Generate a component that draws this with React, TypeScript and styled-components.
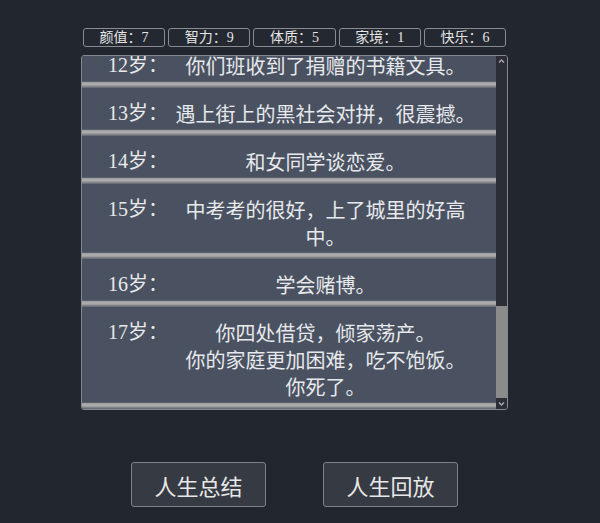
import React, { useLayoutEffect, useRef, useState } from "react";
import styled, { createGlobalStyle } from "styled-components";

const GlobalStyle = createGlobalStyle`
  html, body {
    margin: 0;
    padding: 0;
    background: #22262f;
  }
  body {
    font-family: "Noto Sans CJK SC", "Noto Sans", sans-serif;
  }
`;

const Page = styled.div`
  width: 589px;
  min-height: 523px;
  box-sizing: border-box;
  padding-top: 28px;
  display: flex;
  flex-direction: column;
  align-items: center;
`;

const Stats = styled.div`
  width: 423px;
  display: grid;
  grid-template-columns: repeat(5, 1fr);
  gap: 3px;
`;

const Stat = styled.div`
  height: 19px;
  box-sizing: border-box;
  border: 1px solid #898c93;
  border-radius: 3px;
  background: #242830;
  color: #e6e6e6;
  display: flex;
  align-items: center;
  justify-content: center;
  font: 14px/1 "Liberation Serif", "Noto Sans CJK SC", serif;
`;

const ListBox = styled.div`
  margin-top: 8px;
  width: 427px;
  height: 355px;
  box-sizing: border-box;
  border: 1px solid #85888e;
  border-radius: 3px;
  background: #2b2e36;
  overflow: hidden;
  display: flex;
`;

const Viewport = styled.div`
  flex: 1;
  min-width: 0;
  overflow-y: auto;
  scrollbar-width: none;
  &::-webkit-scrollbar {
    display: none;
  }
`;

const ScrollBar = styled.div`
  flex: none;
  width: 11px;
  display: flex;
  flex-direction: column;
  background: #2b2e36;
`;

const ScrollButton = styled.div`
  flex: none;
  height: 11px;
  display: flex;
  align-items: center;
  justify-content: center;
`;

const Track = styled.div`
  flex: 1;
  display: flex;
  flex-direction: column;
`;

const Thumb = styled.div`
  flex: none;
  background: #8b8b8b;
`;

const Row = styled.div`
  background: #4a5261;
  display: flex;
  flex-direction: column;
`;

const RowBody = styled.div`
  display: flex;
  padding: 12px 15px 2px 26px;
  color: #e7e9ec;
  font-size: 20px;
  line-height: 27px;
`;

const Age = styled.div`
  flex: none;
  width: 62px;
  font-family: "Liberation Serif", "Noto Sans CJK SC", serif;
`;

const Events = styled.div`
  flex: 1;
  text-align: center;
  font-family: "Noto Sans CJK SC", sans-serif;
`;

const Divider = styled.div`
  height: 7px;
  background: linear-gradient(
    to bottom,
    #5c6169 0px,
    #5c6169 1px,
    #939597 1px,
    #aaaaaa 2px,
    #aaaaaa 4px,
    #8e8f91 5px,
    #74777d 6px,
    #60656d 7px
  );
`;

const Buttons = styled.div`
  margin-top: 52px;
  display: flex;
  gap: 57px;
`;

const Button = styled.button`
  width: 135px;
  height: 45px;
  box-sizing: border-box;
  border: 1px solid #7d8189;
  border-radius: 3px;
  background: #363a43;
  color: #e8e8e8;
  font: 22px/1 "Noto Sans CJK SC", sans-serif;
  padding: 0;
  display: flex;
  align-items: center;
  justify-content: center;
  cursor: pointer;
`;

const Chevron = ({ up }: { up?: boolean }) => (
  <svg width="11" height="11" viewBox="0 0 11 11">
    <path
      d={up ? "M3 6.5 L5.5 4 L8 6.5" : "M3 4.5 L5.5 7 L8 4.5"}
      fill="none"
      stroke="#a9abb0"
      strokeWidth="1.4"
    />
  </svg>
);

const stats = [
  { name: "颜值", value: 7 },
  { name: "智力", value: 9 },
  { name: "体质", value: 5 },
  { name: "家境", value: 1 },
  { name: "快乐", value: 6 },
];

const life: { age: number; events: string[] }[] = [
  { age: 0, events: ["你出生了，是个男孩。", "你的家庭是普通工薪阶层。"] },
  { age: 1, events: ["你学会了走路。", "你第一次叫了“妈妈”。"] },
  { age: 2, events: ["你在家里玩耍。", "你学会了说很多话。"] },
  { age: 3, events: ["你上了幼儿园。", "你交到了第一个好朋友。"] },
  { age: 4, events: ["你在幼儿园里很调皮。", "老师经常批评你。"] },
  { age: 5, events: ["你学会了骑自行车。", "你摔了一跤，膝盖流血了。"] },
  { age: 6, events: ["你上了小学。", "你的成绩还不错。"] },
  { age: 7, events: ["你加入了少先队。", "你戴上了红领巾。"] },
  { age: 8, events: ["你迷上了动画片。", "你每天放学都看电视。"] },
  { age: 9, events: ["你的父母吵了一架。", "你很害怕。"] },
  { age: 10, events: ["你考试考了第一名。", "父母给你买了新书包。"] },
  { age: 11, events: ["你沉迷于电子游戏。", "成绩有所下降。"] },
  { age: 12, events: ["你们班收到了捐赠的书籍文具。"] },
  { age: 13, events: ["遇上街上的黑社会对拼，很震撼。"] },
  { age: 14, events: ["和女同学谈恋爱。"] },
  { age: 15, events: ["中考考的很好，上了城里的好高中。"] },
  { age: 16, events: ["学会赌博。"] },
  { age: 17, events: ["你四处借贷，倾家荡产。", "你的家庭更加困难，吃不饱饭。", "你死了。"] },
];

export default function App() {
  const viewRef = useRef<HTMLDivElement>(null);
  const trackRef = useRef<HTMLDivElement>(null);
  const [thumb, setThumb] = useState({ top: 0, height: 40 });

  useLayoutEffect(() => {
    const el = viewRef.current;
    const track = trackRef.current;
    if (!el || !track) return;
    el.scrollTop = el.scrollHeight;
    const update = () => {
      const trackH = track.clientHeight;
      const ratio = el.clientHeight / el.scrollHeight;
      const h = Math.max(20, Math.round(trackH * ratio));
      const maxScroll = el.scrollHeight - el.clientHeight;
      const top = maxScroll > 0 ? Math.round((trackH - h) * (el.scrollTop / maxScroll)) : 0;
      setThumb({ top, height: h });
    };
    update();
    el.addEventListener("scroll", update);
    return () => el.removeEventListener("scroll", update);
  }, []);

  return (
    <>
      <GlobalStyle />
      <Page>
        <Stats>
          {stats.map((s) => (
            <Stat key={s.name}>
              {s.name}：{s.value}
            </Stat>
          ))}
        </Stats>
        <ListBox>
          <Viewport ref={viewRef}>
            {life.map((item) => (
              <Row key={item.age}>
                <RowBody>
                  <Age>{item.age}岁：</Age>
                  <Events>
                    {item.events.map((e, i) => (
                      <div key={i}>{e}</div>
                    ))}
                  </Events>
                </RowBody>
                <Divider />
              </Row>
            ))}
          </Viewport>
          <ScrollBar>
            <ScrollButton>
              <Chevron up />
            </ScrollButton>
            <Track ref={trackRef}>
              <Thumb style={{ marginTop: thumb.top, height: thumb.height }} />
            </Track>
            <ScrollButton>
              <Chevron />
            </ScrollButton>
          </ScrollBar>
        </ListBox>
        <Buttons>
          <Button>人生总结</Button>
          <Button>人生回放</Button>
        </Buttons>
      </Page>
    </>
  );
}
